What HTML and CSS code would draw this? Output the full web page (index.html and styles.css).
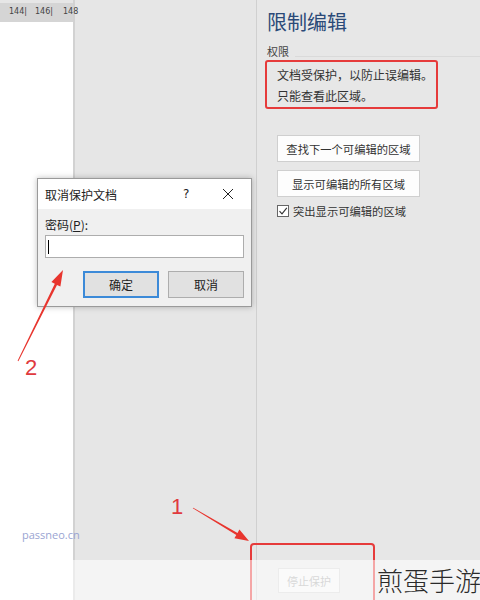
FILE: index.html
```html
<!DOCTYPE html>
<html lang="zh-CN">
<head>
    <meta charset="UTF-8">
    <meta name="viewport" content="width=device-width, initial-scale=1.0">
    <title>限制编辑</title>
    <link rel="stylesheet" href="styles.css">
</head>
<body>

<div class="screen">
    <div class="doc">
        <div class="ruler">
            <span class="tick t1">144|</span>
            <span class="tick t2">146|</span>
            <span class="tick t3">148</span>
        </div>
        <div class="page">
            <span class="site">passneo.cn</span>
        </div>
    </div>

    <div class="workspace"></div>

    <aside class="pane">
        <h1>限制编辑</h1>
        <div class="section">权限</div>
        <div class="notice">文档受保护，以防止误编辑。<br>只能查看此区域。</div>
        <div class="actions">
            <button class="pane-btn">查找下一个可编辑的区域</button>
            <button class="pane-btn">显示可编辑的所有区域</button>
        </div>
        <label class="check">
            <span class="box">
                <svg width="10" height="10" viewBox="0 0 10 10"><path d="M1.5 5.2 L4 7.8 L8.8 1.8" fill="none" stroke="#333" stroke-width="1.1"/></svg>
            </span>
            突出显示可编辑的区域
        </label>
        <div class="stop">
            <button class="stop-btn" disabled>停止保护</button>
        </div>
    </aside>

    <div class="dialog">
        <div class="dlg-title">
            <span class="dlg-name">取消保护文档</span>
            <span class="dlg-help">?</span>
            <span class="dlg-close">
                <svg width="12" height="12" viewBox="0 0 12 12"><path d="M1 1 L11 11 M11 1 L1 11" stroke="#222" stroke-width="1"/></svg>
            </span>
        </div>
        <div class="dlg-body">
            <div class="dlg-label">密码(<u>P</u>):</div>
            <div class="dlg-input"><span class="caret"></span></div>
            <div class="dlg-buttons">
                <button class="dlg-btn default">确定</button>
                <button class="dlg-btn">取消</button>
            </div>
        </div>
    </div>

    <div class="mark-box"></div>
    <div class="band"></div>
    <div class="watermark">煎蛋手游</div>

    <svg class="notes" width="480" height="600" viewBox="0 0 480 600">
        <polygon fill="#e8352e" points="17.6,360.8 54.8,283.7 51.4,282.1 63,270 60.4,286.5 57,284.9 18.4,361.2"/>
        <text x="25" y="375" class="num">2</text>
        <polygon fill="#e8352e" points="192.8,508.3 236.3,534.9 234.4,538.2 249,541 239.4,529.6 237.5,532.9 193.2,507.7"/>
        <text x="171" y="514" class="num">1</text>
    </svg>
</div>

</body>
</html>
```

FILE: styles.css
```css
body {
    margin: 0;
    font-family: "Noto Sans CJK SC", "Noto Sans", sans-serif;
    color: #333;
}
.screen {
    position: relative;
    width: 480px;
    height: 600px;
    overflow: hidden;
    display: flex;
    background: #e6e6e6;
}
.doc {
    width: 73px;
    display: flex;
    flex-direction: column;
    border-right: 2px solid #d2d2d2;
}
.ruler {
    position: relative;
    height: 19px;
    margin-top: 3px;
    background: #d5d5d5;
    font-family: "DejaVu Sans", sans-serif;
    font-size: 8px;
    color: #444;
}
.tick {
    position: absolute;
    top: 4px;
}
.t1 { left: 9px; }
.t2 { left: 35px; }
.t3 { left: 63px; }
.page {
    flex: 1;
    background: #fff;
    display: flex;
    flex-direction: column;
    padding: 0 0 58px 22px;
}
.site {
    margin-top: auto;
    font-family: "Open Sans", sans-serif;
    font-size: 11px;
    color: #9aa4d2;
}
.workspace {
    width: 181px;
}
.pane {
    flex: 1;
    display: flex;
    flex-direction: column;
    border-left: 1px solid #d0d0d0;
    padding: 9px 0 7px 10px;
    background: #e7e7e7;
}
.pane h1 {
    margin: 0;
    font-size: 20px;
    line-height: 26px;
    font-weight: normal;
    color: #2b4a78;
}
.section {
    display: flex;
    align-items: center;
    gap: 6px;
    margin-top: 9px;
    font-size: 11px;
    line-height: 14px;
    color: #444;
}
.section::after {
    content: "";
    flex: 1;
    height: 1px;
    margin-top: 10px;
    background: #dadada;
}
.notice {
    width: 159px;
    margin: 2px 0 0 -2px;
    padding: 2px 0 1px 10px;
    border: 2px solid #e63b3b;
    border-radius: 3px;
    white-space: nowrap;
    font-size: 12px;
    line-height: 21px;
    color: #333;
}
.actions {
    display: flex;
    flex-direction: column;
    gap: 8px;
    margin: 26px 0 0 10px;
}
.pane-btn {
    width: 143px;
    height: 27px;
    padding: 0;
    background: #fdfdfd;
    border: 1px solid #cfcfcf;
    font-family: inherit;
    font-size: 11.3px;
    color: #333;
}
.check {
    display: flex;
    align-items: center;
    gap: 4px;
    margin: 6px 0 0 10px;
    font-size: 11.3px;
    color: #333;
}
.box {
    width: 10px;
    height: 10px;
    border: 1px solid #666;
    background: #fff;
    display: flex;
}
.stop {
    margin-top: auto;
    padding-left: 11px;
}
.stop-btn {
    width: 62px;
    height: 25px;
    padding: 0;
    background: #f4f4f4;
    border: 1px solid #d4d4d4;
    font-family: inherit;
    font-size: 11px;
    color: #a8a8a8;
}
.dialog {
    position: absolute;
    left: 37px;
    top: 178px;
    width: 213px;
    border: 1px solid #9a9a9a;
    box-shadow: 0 0 6px rgba(0, 0, 0, 0.25);
    background: #f0f0f0;
}
.dlg-title {
    height: 30px;
    display: flex;
    align-items: center;
    padding-left: 7px;
    background: #fff;
    font-size: 12px;
    color: #222;
}
.dlg-name {
    flex: 1;
}
.dlg-help {
    width: 20px;
    font-family: "DejaVu Sans", sans-serif;
    font-size: 12px;
    margin-right: 19px;
}
.dlg-close {
    width: 29px;
    display: flex;
}
.dlg-body {
    padding: 8px 7px 8px 7px;
}
.dlg-label {
    font-size: 12px;
    line-height: 16px;
    color: #222;
}
.dlg-input {
    height: 21px;
    margin-top: 2px;
    border: 1px solid #adadad;
    background: #fff;
    display: flex;
    align-items: center;
    padding-left: 2px;
}
.caret {
    width: 1px;
    height: 14px;
    background: #000;
}
.dlg-buttons {
    display: flex;
    justify-content: flex-end;
    gap: 9px;
    margin-top: 13px;
}
.dlg-btn {
    width: 76px;
    height: 27px;
    padding: 0;
    background: #e1e1e1;
    border: 1px solid #adadad;
    font-family: inherit;
    font-size: 12px;
    color: #222;
}
.dlg-btn.default {
    border: 2px solid #3c8ad8;
}
.mark-box {
    position: absolute;
    left: 250px;
    top: 543px;
    width: 121px;
    height: 70px;
    border: 2px solid #e63b3b;
    border-radius: 4px;
}
.band {
    position: absolute;
    left: 0;
    right: 0;
    top: 560px;
    bottom: 0;
    background: rgba(255, 255, 255, 0.55);
}
.watermark {
    position: absolute;
    left: 377px;
    top: 562px;
    white-space: nowrap;
    font-size: 26px;
    line-height: 36px;
    font-weight: 300;
    color: #2a2a2a;
}
.notes {
    position: absolute;
    left: 0;
    top: 0;
}
.num {
    font-family: "Liberation Sans", sans-serif;
    font-size: 22px;
    fill: #e03a3e;
}
```
